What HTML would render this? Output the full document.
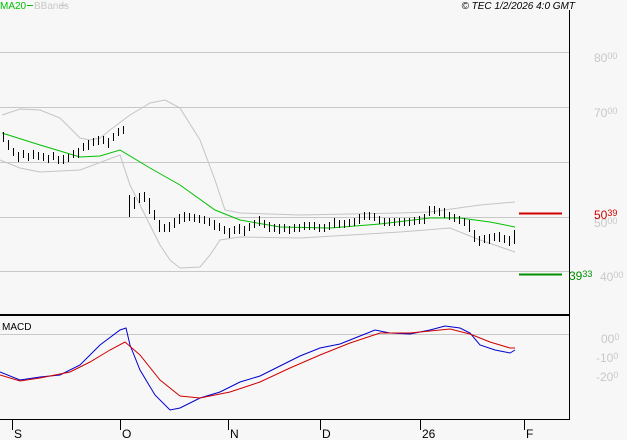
<!DOCTYPE html><html><head><style>
body{margin:0;background:#f7f7f7;width:627px;height:440px;overflow:hidden;font-family:"Liberation Sans",sans-serif}
svg{position:absolute;left:0;top:0}
</style></head><body>
<svg width="627" height="440" xmlns="http://www.w3.org/2000/svg" font-family="Liberation Sans, sans-serif">
<rect width="627" height="440" fill="#f7f7f7"/>
<g stroke="#c8c8c8" stroke-width="1">
<line x1="0" y1="52.5" x2="569" y2="52.5"/><line x1="0" y1="107.5" x2="569" y2="107.5"/>
<line x1="0" y1="162.5" x2="569" y2="162.5"/><line x1="0" y1="217.5" x2="569" y2="217.5"/>
<line x1="0" y1="271.5" x2="569" y2="271.5"/><line x1="0" y1="334.5" x2="569" y2="334.5"/>
</g>
<line x1="569.5" y1="10" x2="569.5" y2="420" stroke="#000"/>
<line x1="0" y1="315" x2="570" y2="315" stroke="#000" stroke-width="2"/>
<line x1="0" y1="419.5" x2="570" y2="419.5" stroke="#000"/>
<g stroke="#000"><line x1="12.5" y1="420" x2="12.5" y2="430"/><line x1="120.5" y1="420" x2="120.5" y2="430"/><line x1="228.5" y1="420" x2="228.5" y2="430"/><line x1="320.5" y1="420" x2="320.5" y2="430"/><line x1="420.5" y1="420" x2="420.5" y2="430"/><line x1="524.5" y1="420" x2="524.5" y2="430"/></g>
<g font-size="12" fill="#000"><text x="14" y="438">S</text><text x="122" y="438">O</text><text x="230" y="438">N</text><text x="322" y="438">D</text><text x="422" y="438">26</text><text x="526" y="438">F</text></g>
<g fill="none" stroke="#c4c4c4">
<polyline points="2,115 20,109 40,110 60,118 80,138 90,140 100,138 110,130 130,115 150,103 165,100 180,108 200,140 215,180 225,210 240,213 300,215 400,213 430,212 480,205 515,202"/>
<polyline points="0,160 20,168 40,172 80,170 120,155 130,185 150,225 160,245 170,260 180,268 200,267 210,255 220,240 240,237 300,238 400,232 450,228 480,240 515,252"/>
</g>
<polyline fill="none" stroke="#00c000" points="2,133 40,145 80,157 100,156 120,150 150,168 180,185 215,210 240,220 280,227 330,228 380,224 430,218 460,218 490,222 515,227"/>
<path stroke="#000" fill="none" shape-rendering="crispEdges" d="M3.5 132v10M8.5 140v10M13.5 148v8M18.5 152v10M23.5 150v8M28.5 153v8M33.5 150v9M38.5 152v8M43.5 153v8M48.5 155v8M53.5 152v8M58.5 156v8M63.5 155v9M68.5 154v8M73.5 150v8M78.5 148v10M83.5 143v8M88.5 140v10M93.5 138v8M98.5 136v9M103.5 136v8M108.5 138v10M113.5 133v8M118.5 128v8M123.5 126v8M129.5 195v22M134.5 197v12M139.5 193v10M144.5 192v10M149.5 198v16M154.5 210v10M159.5 220v12M164.5 224v8M169.5 222v10M174.5 218v10M179.5 214v10M184.5 212v10M189.5 213v8M194.5 214v8M199.5 215v8M204.5 216v8M209.5 218v8M214.5 220v10M219.5 223v8M224.5 226v8M229.5 228v10M234.5 226v8M239.5 224v10M244.5 226v10M249.5 223v8M254.5 220v8M259.5 216v10M264.5 220v8M269.5 222v10M274.5 224v8M279.5 224v10M284.5 224v8M289.5 226v8M294.5 224v8M299.5 224v8M304.5 222v8M309.5 222v8M314.5 222v8M319.5 224v8M324.5 224v8M329.5 222v8M334.5 218v10M339.5 220v8M344.5 220v8M349.5 219v8M354.5 218v8M359.5 214v10M364.5 212v8M369.5 212v8M374.5 213v8M379.5 216v8M384.5 218v8M389.5 218v8M394.5 218v8M399.5 218v8M404.5 218v8M409.5 218v8M414.5 217v8M419.5 216v8M424.5 214v10M429.5 206v10M434.5 206v8M439.5 208v8M444.5 208v10M449.5 212v8M454.5 214v8M459.5 216v8M464.5 218v8M469.5 220v12M474.5 230v12M479.5 236v10M484.5 235v8M489.5 234v10M494.5 233v8M499.5 232v10M504.5 235v8M509.5 236v10M514.5 230v14"/>
<polyline fill="none" stroke="#0000d0" points="0,372 20,380 40,377 60,375 80,365 100,345 120,330 126,328 130,345 140,370 155,395 170,410 180,408 200,398 220,392 240,382 260,376 280,366 300,356 320,348 340,344 360,336 375,330 390,333 410,334 430,330 445,326 460,328 470,333 480,345 495,350 510,353 515,350"/>
<polyline fill="none" stroke="#d00000" points="0,375 20,381 40,378 70,372 90,362 110,350 125,342 140,355 160,380 180,396 200,398 230,392 260,382 290,368 320,355 350,343 380,333 410,333 430,331 450,329 470,334 490,342 510,348 515,348"/>
<line x1="519" y1="213.5" x2="562" y2="213.5" stroke="#d00000" stroke-width="2"/>
<line x1="519" y1="274.5" x2="562" y2="274.5" stroke="#009000" stroke-width="2"/>
<g font-size="12" fill="#c8c8c8">
<text x="594" y="62">80<tspan font-size="9" dy="-3">00</tspan></text>
<text x="594" y="117">70<tspan font-size="9" dy="-3">00</tspan></text>
<text x="594" y="227">50<tspan font-size="9" dy="-3">00</tspan></text>
<text x="600" y="281">40<tspan font-size="9" dy="-3">00</tspan></text>
<text x="601" y="343">00<tspan font-size="9" dy="-3">0</tspan></text>
<text x="596" y="362">-10<tspan font-size="9" dy="-3">0</tspan></text>
<text x="596" y="381">-20<tspan font-size="9" dy="-3">0</tspan></text>
</g>
<text x="594" y="219" font-size="12" fill="#d00000">50<tspan font-size="9" dy="-3">39</tspan></text>
<text x="569" y="280" font-size="12" fill="#009000">39<tspan font-size="9" dy="-3">33</tspan></text>
<text x="0" y="9" font-size="10" fill="#00c000">MA20</text><line x1="27" y1="5.5" x2="33" y2="5.5" stroke="#00c000"/>
<text x="34" y="9" font-size="10" fill="#c8c8c8">BBands</text><line x1="60" y1="5.5" x2="67" y2="5.5" stroke="#c8c8c8"/>
<text x="575" y="9" font-size="10" font-style="italic" fill="#000" text-anchor="end">© TEC 1/2/2026 4:0 GMT</text>
<text x="2" y="330" font-size="10" fill="#000">MACD</text>
</svg></body></html>
